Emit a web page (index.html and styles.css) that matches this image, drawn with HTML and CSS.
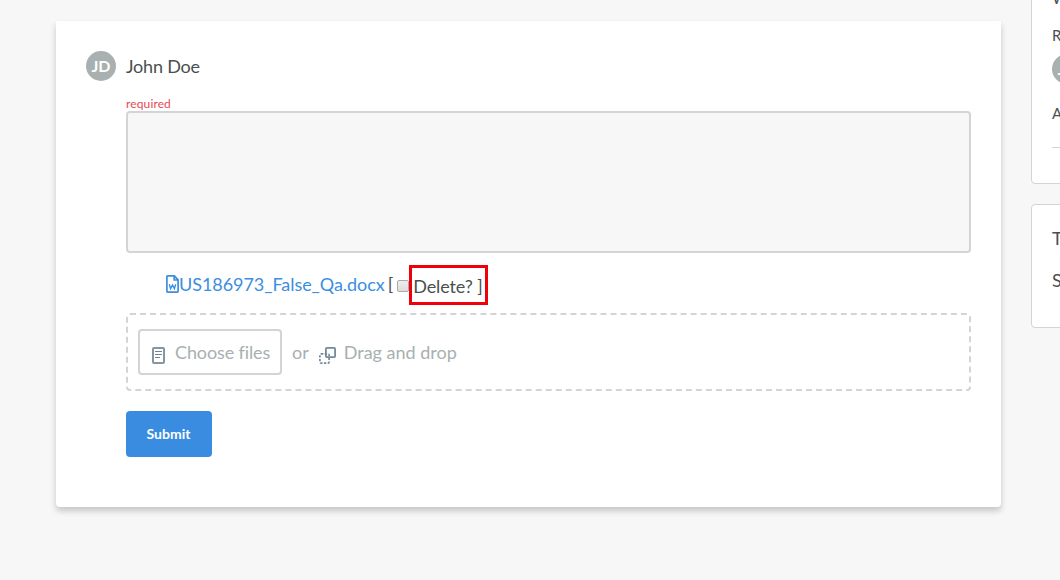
FILE: index.html
```html
<!DOCTYPE html>
<html lang="en">
<head>
<meta charset="utf-8">
<title>Comment</title>
<link rel="stylesheet" href="styles.css">
</head>
<body>
<div class="layout">
  <main class="card">
    <header class="author">
      <span class="avatar">JD</span>
      <span class="author-name">John Doe</span>
    </header>
    <form class="comment-form">
      <label class="required" for="comment">required</label>
      <textarea class="comment-input" id="comment"></textarea>
      <div class="attachment">
        <svg class="doc-icon" viewBox="0 0 13 18" width="13" height="18" fill="none" stroke="currentColor" stroke-width="1.7">
          <path d="M1.6.9h6.7l3.8 4v11.4q0 .8-.8.8H1.6q-.7 0-.7-.8V1.6q0-.7.7-.7zM8.2.8V5h4"/>
          <path d="M3.3 9.2l1.3 4.4L6.5 10l1.9 3.6 1.3-4.4" stroke-width="1.4"/>
        </svg>
        <a class="file-link">US186973_False_Qa.docx</a>
        <span class="bracket">[</span>
        <span class="checkbox"></span>
        <span class="delete">Delete? ]</span>
      </div>
      <div class="dropzone">
        <span class="choose">
          <svg class="page-icon" viewBox="0 0 13 17" width="13" height="17" fill="none" stroke="#8496a4">
            <rect x="1" y="1" width="11" height="15" rx="1" stroke-width="2"/>
            <path d="M3 4.5h7M3 7.5h7M3 10.5h5" stroke-width="1.2" stroke="#6f8292"/>
          </svg>
          <span class="choose-text">Choose files</span>
        </span>
        <span class="or">or</span>
        <svg class="drag-icon" viewBox="0 0 17 17" width="17" height="17" fill="none" stroke="#76899a">
          <rect x="6.9" y=".9" width="9.2" height="9.2" rx="1" stroke-width="1.8"/>
          <rect x=".9" y="6.9" width="9.2" height="9.2" rx="1" stroke-width="1.7" stroke-dasharray="2.4 1.4"/>
        </svg>
        <span class="drag">Drag and drop</span>
      </div>
      <button class="submit" type="button">Submit</button>
    </form>
  </main>
  <aside class="sidebar">
    <section class="panel panel-people">
      <div class="panel-title">W</div>
      <div class="panel-label">R</div>
      <span class="avatar">JD</span>
      <div class="panel-label panel-assignee">A</div>
      <hr class="rule">
    </section>
    <section class="panel panel-topic">
      <div class="topic-title">T</div>
      <div class="topic-value">S</div>
    </section>
  </aside>
</div>
</body>
</html>
```
FILE: styles.css
```css
* { box-sizing: border-box; }
body {
  margin: 0;
  height: 580px;
  overflow: hidden;
  background: #f7f7f7;
  color: #4a4f50;
  font: 18px/24px Lato, sans-serif;
}
.layout {
  display: flex;
  align-items: flex-start;
  gap: 30px;
  height: 580px;
  padding-left: 56px;
  overflow: hidden;
}
.card {
  flex: none;
  width: 945px;
  height: 486px;
  margin-top: 21px;
  padding: 30px;
  background: #fff;
  border-radius: 0 0 4px 4px;
  box-shadow: 0 4px 6px rgba(0, 0, 0, .2);
}
.author { display: flex; align-items: center; gap: 10px; height: 30px; }
.author-name { letter-spacing: -.2px; }
.avatar {
  display: flex;
  align-items: center;
  justify-content: center;
  width: 30px;
  height: 30px;
  padding-bottom: 1px;
  border-radius: 50%;
  background: #a8b0b0;
  color: #fff;
  font-size: 16px;
  font-weight: 700;
}
.comment-form { display: flex; flex-direction: column; align-items: flex-start; margin-left: 40px; }
.required { margin-top: 16px; font-size: 12px; line-height: 14px; letter-spacing: .13px; color: #e84855; }
.comment-input {
  display: block;
  width: 845px;
  height: 142px;
  border: 2px solid #d1d5d5;
  border-radius: 4px;
  background: #f7f7f7;
  resize: none;
}
.attachment { display: flex; align-items: flex-start; height: 40px; margin: 12px 0 8px 40px; }
.doc-icon { flex: none; margin-top: 10px; color: #3b8ee0; }
.file-link { margin-top: 7px; letter-spacing: -.05px; color: #3b8ee0; }
.bracket { margin: 7px 0 0 3px; }
.checkbox {
  width: 12px;
  height: 12px;
  margin: 15px 0 0 4px;
  border: 1px solid #aaa;
  border-radius: 2px;
  background: linear-gradient(#eee, #ddd);
}
.delete {
  height: 40px;
  width: 79px;
  padding: 6px 0 0 1px;
  border: 3px solid #f00008;
  letter-spacing: -.1px;
  white-space: nowrap;
}
.dropzone {
  display: flex;
  align-items: center;
  width: 845px;
  height: 78px;
  padding-left: 10px;
  border: 2px dashed #d1d5d5;
  border-radius: 4px;
  color: #a8b0b0;
}
.choose {
  display: flex;
  align-items: center;
  gap: 10px;
  width: 144px;
  height: 46px;
  padding-left: 12px;
  border: 2px solid #d1d5d5;
  border-radius: 4px;
  white-space: nowrap;
}
.choose-text { letter-spacing: -.12px; }
.page-icon { margin-top: 6px; }
.or { margin-left: 10px; }
.drag-icon { margin: 6px 8px 0 10px; }
.submit {
  width: 86px;
  height: 46px;
  margin-top: 20px;
  padding: 0 1px 2px 0;
  border: 0;
  border-radius: 4px;
  background: #398cdf;
  color: #fff;
  font: 700 14px Lato, sans-serif;
}
.sidebar { flex: none; width: 240px; }
.panel {
  padding-left: 20px;
  border: 1px solid #d1d5d5;
  border-radius: 4px;
  background: #fff;
}
.panel-people {
  height: 204px;
  margin-top: -20px;
  font-size: 16px;
}
.panel-title { padding-top: 5px; }
.panel-label { margin-top: 13px; font-size: 15px; }
.panel-people .avatar { margin-top: 7px; }
.panel-people .panel-assignee { margin-top: 17px; }
.rule { margin: 22px 20px 0 0; border: 0; border-top: 1px solid #d1d5d5; }
.panel-topic { height: 124px; margin-top: 20px; padding-top: 21px; }
.topic-value { margin-top: 18px; }
```
